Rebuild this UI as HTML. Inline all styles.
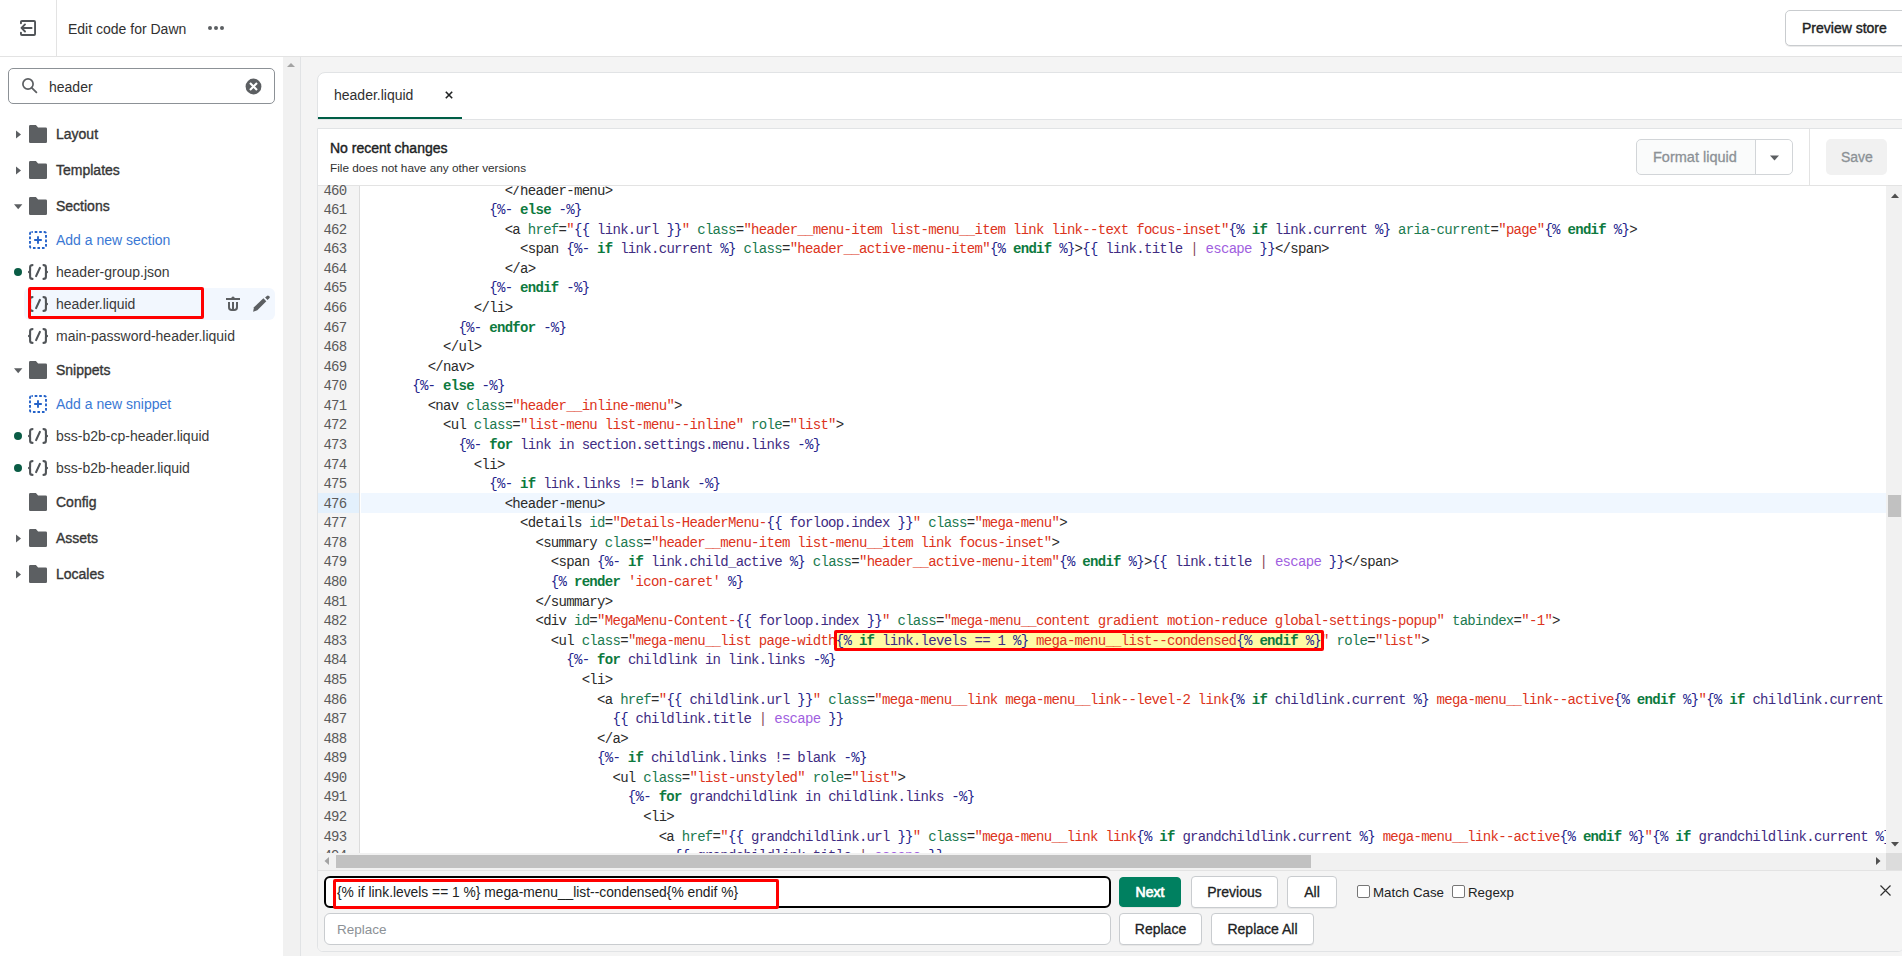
<!DOCTYPE html>
<html><head><meta charset="utf-8">
<style>
*{box-sizing:border-box;margin:0;padding:0}
html,body{width:1902px;height:956px;overflow:hidden;background:#fff;font-family:"Liberation Sans",sans-serif;color:#303030}
.abs{position:absolute}
/* top bar */
#top{position:absolute;left:0;top:0;width:1902px;height:57px;background:#fff;border-bottom:1px solid #e3e3e3}
#top .div{position:absolute;left:56px;top:0;width:1px;height:56px;background:#e3e3e3}
#top .title{position:absolute;left:68px;top:21px;font-size:14px;color:#303030;line-height:17px}
#preview{position:absolute;left:1785px;top:10px;width:130px;height:36px;border:1px solid #c9cccf;border-radius:5px;background:#fff;box-shadow:0 1px 0 rgba(0,0,0,.08)}
#preview span{position:absolute;left:16px;top:9px;font-size:14px;-webkit-text-stroke:0.4px #202223;color:#202223;line-height:17px}
/* sidebar */
#side{position:absolute;left:0;top:57px;width:283px;height:899px;background:#fff}
#sscroll{position:absolute;left:283px;top:57px;width:18px;height:899px;background:#f1f1f1;border-right:1px solid #e1e3e5}
#search{position:absolute;left:8px;top:68px;width:267px;height:36px;border:1px solid #8c9196;border-radius:5px;background:#fff}
#search .t{position:absolute;left:40px;top:10px;font-size:14px;color:#303030;line-height:17px}
.tri{position:absolute;width:0;height:0}
.tri.r{border-top:4px solid transparent;border-bottom:4px solid transparent;border-left:5px solid #5c5f62}
.tri.d{border-left:4px solid transparent;border-right:4px solid transparent;border-top:5px solid #5c5f62}
.fold{position:absolute;width:18px;height:18px}
.item{position:absolute;left:56px;font-size:14px;line-height:17px;color:#3a3a3a;white-space:nowrap}
.item.b{font-size:14px;-webkit-text-stroke:0.35px #303030}
.item.link{color:#3a78d4}
.dot{position:absolute;left:14px;width:8px;height:8px;border-radius:50%;background:#0a5c45}
.fic{position:absolute;left:28px;font-size:15px;color:#5c5f62;line-height:17px;font-family:"Liberation Mono",monospace}
/* main */
#main{position:absolute;left:301px;top:57px;width:1601px;height:899px;background:#f4f4f4}
#tabcard{position:absolute;left:317px;top:72px;width:1600px;height:48px;background:#fff;border:1px solid #e1e3e5;border-radius:8px 0 0 0}
#tabcard .tab{position:absolute;left:16px;top:14px;font-size:14px;color:#303030;line-height:17px}
#tabcard .x{position:absolute;left:126px;top:13px;font-size:14px;color:#303030}
#tabcard .ul{position:absolute;left:0;top:44px;width:144px;height:2px;background:#005e46}
#card{position:absolute;left:317px;top:128px;width:1587px;height:824px;background:#fff;border:1px solid #e1e3e5;border-radius:0 0 6px 6px;overflow:hidden}
#card .h1{position:absolute;left:12px;top:11px;font-size:14px;-webkit-text-stroke:0.4px #202223;color:#202223;line-height:17px}
#card .h2{position:absolute;left:12px;top:32px;font-size:11.8px;color:#303030;line-height:15px}
#hdrline{position:absolute;left:0;top:56px;width:1600px;height:1px;background:#e3e3e3}
#fmt{position:absolute;left:1318px;top:10px;width:157px;height:36px;border:1px solid #d2d5d8;border-radius:5px;background:#fafbfb}
#fmt span{position:absolute;left:16px;top:9px;font-size:14.5px;-webkit-text-stroke:0.3px #8c9196;color:#8c9196;line-height:17px}
#fmt .sep{position:absolute;left:118px;top:0;width:1px;height:34px;background:#d2d5d8}
#vsep{position:absolute;left:1491px;top:0;width:1px;height:56px;background:#e3e3e3}
#save{position:absolute;left:1508px;top:10px;width:61px;height:36px;border-radius:5px;background:#f1f1f1}
#save span{position:absolute;left:15px;top:10px;font-size:14px;-webkit-text-stroke:0.3px #8c9196;color:#8c9196;line-height:17px}
/* code */
#gutter{position:absolute;left:0;top:57px;width:42px;height:667px;background:#f4f4f4;border-right:1px solid #dcdcdc}
#code{position:absolute;left:43px;top:57px;width:1525px;height:667px;overflow:hidden;background:#fff}
.lines{position:absolute;left:0;top:0}
.gn{height:19.58px;line-height:19.58px;font-family:"Liberation Mono",monospace;font-size:14px;color:#5a5a5a;text-align:right;width:28.5px;letter-spacing:-0.7px}
.ln{height:19.58px;line-height:19.58px;font-family:"Liberation Mono",monospace;font-size:14px;white-space:pre;letter-spacing:-0.7px;color:#2b2b2b;padding-left:5px}
.gn.act{}
i{font-style:normal}
i.t{color:#2b2b2b}
i.a{color:#1b7a4f}
i.s{color:#dc3320}
i.d{color:#24248c}
i.k{color:#0d7a3e;font-weight:bold}
i.v{color:#3f2c82}
i.f{color:#9f5fe0}
i.p{color:#8a4a5c}
#match{position:absolute;background:#fffba5}
#vscroll{position:absolute;left:1568px;top:57px;width:17px;height:667px;background:#f1f1f1}
#hscroll{position:absolute;left:0;top:724px;width:1568px;height:17px;background:#f1f1f1}
#hthumb{position:absolute;left:18px;top:2px;width:975px;height:13px;background:#c1c1c1}
/* search panel */
#sp{position:absolute;left:0;top:741px;width:1600px;height:83px;background:#f4f4f4;border-top:1px solid #e3e3e3}
.inp{position:absolute;background:#fff;border-radius:6px}
.btn{position:absolute;height:30px;border:1px solid #c9cccf;border-radius:4px;background:#fff;font-size:14px;-webkit-text-stroke:0.3px #202223;color:#202223;text-align:center;line-height:29px;box-shadow:0 1px 0 rgba(0,0,0,.05)}
.redbox{position:absolute;border:3px solid #ff0000}
</style></head><body>
<div id="top">
  <svg class="abs" style="left:20px;top:20px" width="16" height="16" viewBox="0 0 16 16"><g fill="none" stroke="#505458" stroke-width="1.9" stroke-linecap="round" stroke-linejoin="round"><path d="M0.95 3.3V1.95a1 1 0 0 1 1-1h12.1a1 1 0 0 1 1 1v12.1a1 1 0 0 1-1 1H1.95a1 1 0 0 1-1-1V12.6"/><path d="M11.6 7.95H2M5 4.4L1.5 7.95L5 11.5"/></g></svg>
  <div class="div"></div>
  <div class="title">Edit code for Dawn</div>
  <svg class="abs" style="left:207px;top:24px" width="18" height="8" viewBox="0 0 18 8"><circle cx="3" cy="4" r="2" fill="#5c5f62"/><circle cx="9" cy="4" r="2" fill="#5c5f62"/><circle cx="15" cy="4" r="2" fill="#5c5f62"/></svg>
  <div id="preview"><span>Preview store</span></div>
</div>

<div id="side"></div>
<div id="sscroll"><div class="tri" style="position:absolute;left:4px;top:6px;border-left:4px solid transparent;border-right:4px solid transparent;border-bottom:4px solid #a3a3a3"></div></div>
<div id="search">
  <svg class="abs" style="left:12px;top:8px" width="18" height="18" viewBox="0 0 18 18"><circle cx="7" cy="7" r="5.1" fill="none" stroke="#5c5f62" stroke-width="1.7"/><path d="M10.8 10.8L15.4 15.3" stroke="#5c5f62" stroke-width="1.8" stroke-linecap="round"/></svg>
  <div class="t">header</div>
  <svg class="abs" style="left:235.5px;top:8.5px" width="17" height="17" viewBox="0 0 17 17"><circle cx="8.5" cy="8.5" r="7.9" fill="#5c5f62"/><path d="M5 5l7 7M12 5l-7 7" stroke="#fff" stroke-width="2.1"/></svg>
</div>

<svg class="abs" style="left:29px;top:125px" width="18" height="18" viewBox="0 0 18 18"><path d="M1.3 0.1h5.6l2.2 2.3h7.6a1.3 1.3 0 0 1 1.3 1.3v13a1.3 1.3 0 0 1-1.3 1.3H1.3A1.3 1.3 0 0 1 0 16.7V1.4A1.3 1.3 0 0 1 1.3 0.1z" fill="#5c5f62"/></svg>
<svg class="abs" style="left:15px;top:129.5px" width="7" height="9" viewBox="0 0 7 9"><path d="M1 0.5L6 4.5L1 8.5z" fill="#5c5f62"/></svg>
<div class="item b" style="top:125.65px">Layout</div>
<svg class="abs" style="left:29px;top:161px" width="18" height="18" viewBox="0 0 18 18"><path d="M1.3 0.1h5.6l2.2 2.3h7.6a1.3 1.3 0 0 1 1.3 1.3v13a1.3 1.3 0 0 1-1.3 1.3H1.3A1.3 1.3 0 0 1 0 16.7V1.4A1.3 1.3 0 0 1 1.3 0.1z" fill="#5c5f62"/></svg>
<svg class="abs" style="left:15px;top:165.5px" width="7" height="9" viewBox="0 0 7 9"><path d="M1 0.5L6 4.5L1 8.5z" fill="#5c5f62"/></svg>
<div class="item b" style="top:161.65px">Templates</div>
<svg class="abs" style="left:29px;top:197px" width="18" height="18" viewBox="0 0 18 18"><path d="M1.3 0.1h5.6l2.2 2.3h7.6a1.3 1.3 0 0 1 1.3 1.3v13a1.3 1.3 0 0 1-1.3 1.3H1.3A1.3 1.3 0 0 1 0 16.7V1.4A1.3 1.3 0 0 1 1.3 0.1z" fill="#5c5f62"/></svg>
<svg class="abs" style="left:13.8px;top:202.5px" width="9" height="7" viewBox="0 0 9 7"><path d="M0 1.2L8.4 1.2L4.2 6.2z" fill="#5c5f62"/></svg>
<div class="item b" style="top:197.65px">Sections</div>
<svg class="abs" style="left:29px;top:231px" width="18" height="18" viewBox="0 0 18 18"><rect x="1" y="1" width="16" height="16" rx="1.5" fill="none" stroke="#2462c9" stroke-width="1.9" stroke-dasharray="2.6 1.9" stroke-dashoffset="1.3"/><path d="M9 5.2v7.6M5.2 9h7.6" stroke="#2462c9" stroke-width="1.9"/></svg>
<div class="item link" style="top:231.65px">Add a new section</div>
<div class="dot" style="top:268px"></div>
<svg class="abs" style="left:28px;top:264px" width="20" height="16" viewBox="0 0 20 16"><g fill="none" stroke="#505458" stroke-width="2.1" stroke-linecap="round"><path d="M4.5 1.1C3 1.1 2.1 1.7 2.1 3.3V6.5C2.1 7.5 1.5 8 0.6 8C1.5 8 2.1 8.5 2.1 9.5V12.7C2.1 14.3 3 14.9 4.5 14.9"/><path d="M15.5 1.1C17 1.1 17.9 1.7 17.9 3.3V6.5C17.9 7.5 18.5 8 19.4 8C18.5 8 17.9 8.5 17.9 9.5V12.7C17.9 14.3 17 14.9 15.5 14.9"/><path d="M11.9 3.9L8.1 12.1"/><path d="M0.9 8H2.2M17.8 8H19.1" stroke-width="2"/></g></svg>
<div class="item" style="top:263.65px">header-group.json</div>
<div class="abs" style="left:24px;top:288px;width:251px;height:32px;background:#f2f7fe;border-radius:6px"></div>
<svg class="abs" style="left:28px;top:296px" width="20" height="16" viewBox="0 0 20 16"><g fill="none" stroke="#505458" stroke-width="2.1" stroke-linecap="round"><path d="M4.5 1.1C3 1.1 2.1 1.7 2.1 3.3V6.5C2.1 7.5 1.5 8 0.6 8C1.5 8 2.1 8.5 2.1 9.5V12.7C2.1 14.3 3 14.9 4.5 14.9"/><path d="M15.5 1.1C17 1.1 17.9 1.7 17.9 3.3V6.5C17.9 7.5 18.5 8 19.4 8C18.5 8 17.9 8.5 17.9 9.5V12.7C17.9 14.3 17 14.9 15.5 14.9"/><path d="M11.9 3.9L8.1 12.1"/><path d="M0.9 8H2.2M17.8 8H19.1" stroke-width="2"/></g></svg>
<div class="item" style="top:295.65px">header.liquid</div>
<svg class="abs" style="left:225px;top:295px" width="46" height="18" viewBox="0 0 46 18"><g fill="#5c5f62"><rect x="1" y="3" width="14" height="2"/><path d="M6.3 3.2a1.7 1.7 0 0 1 3.4 0z"/><path d="M28.1 16.7L29 12.3L38.4 3.2L41.3 6.2L32.3 15.3z"/><path d="M40.1 2.6L41.9 0.9a1.4 1.4 0 0 1 2 0l0.4 0.4a1.4 1.4 0 0 1 0 2L42.5 5.1z"/></g><path d="M4 7v5.2a2.8 2.8 0 0 0 2.8 2.8h2.4a2.8 2.8 0 0 0 2.8-2.8V7M8 7v7" fill="none" stroke="#5c5f62" stroke-width="2"/></svg>
<div class="redbox" style="left:28px;top:287px;width:176px;height:32px;border-radius:2px"></div>
<svg class="abs" style="left:28px;top:328px" width="20" height="16" viewBox="0 0 20 16"><g fill="none" stroke="#505458" stroke-width="2.1" stroke-linecap="round"><path d="M4.5 1.1C3 1.1 2.1 1.7 2.1 3.3V6.5C2.1 7.5 1.5 8 0.6 8C1.5 8 2.1 8.5 2.1 9.5V12.7C2.1 14.3 3 14.9 4.5 14.9"/><path d="M15.5 1.1C17 1.1 17.9 1.7 17.9 3.3V6.5C17.9 7.5 18.5 8 19.4 8C18.5 8 17.9 8.5 17.9 9.5V12.7C17.9 14.3 17 14.9 15.5 14.9"/><path d="M11.9 3.9L8.1 12.1"/><path d="M0.9 8H2.2M17.8 8H19.1" stroke-width="2"/></g></svg>
<div class="item" style="top:327.65px">main-password-header.liquid</div>
<svg class="abs" style="left:29px;top:361px" width="18" height="18" viewBox="0 0 18 18"><path d="M1.3 0.1h5.6l2.2 2.3h7.6a1.3 1.3 0 0 1 1.3 1.3v13a1.3 1.3 0 0 1-1.3 1.3H1.3A1.3 1.3 0 0 1 0 16.7V1.4A1.3 1.3 0 0 1 1.3 0.1z" fill="#5c5f62"/></svg>
<svg class="abs" style="left:13.8px;top:366.5px" width="9" height="7" viewBox="0 0 9 7"><path d="M0 1.2L8.4 1.2L4.2 6.2z" fill="#5c5f62"/></svg>
<div class="item b" style="top:361.65px">Snippets</div>
<svg class="abs" style="left:29px;top:395px" width="18" height="18" viewBox="0 0 18 18"><rect x="1" y="1" width="16" height="16" rx="1.5" fill="none" stroke="#2462c9" stroke-width="1.9" stroke-dasharray="2.6 1.9" stroke-dashoffset="1.3"/><path d="M9 5.2v7.6M5.2 9h7.6" stroke="#2462c9" stroke-width="1.9"/></svg>
<div class="item link" style="top:395.65px">Add a new snippet</div>
<div class="dot" style="top:432px"></div>
<svg class="abs" style="left:28px;top:428px" width="20" height="16" viewBox="0 0 20 16"><g fill="none" stroke="#505458" stroke-width="2.1" stroke-linecap="round"><path d="M4.5 1.1C3 1.1 2.1 1.7 2.1 3.3V6.5C2.1 7.5 1.5 8 0.6 8C1.5 8 2.1 8.5 2.1 9.5V12.7C2.1 14.3 3 14.9 4.5 14.9"/><path d="M15.5 1.1C17 1.1 17.9 1.7 17.9 3.3V6.5C17.9 7.5 18.5 8 19.4 8C18.5 8 17.9 8.5 17.9 9.5V12.7C17.9 14.3 17 14.9 15.5 14.9"/><path d="M11.9 3.9L8.1 12.1"/><path d="M0.9 8H2.2M17.8 8H19.1" stroke-width="2"/></g></svg>
<div class="item" style="top:427.65px">bss-b2b-cp-header.liquid</div>
<div class="dot" style="top:464px"></div>
<svg class="abs" style="left:28px;top:460px" width="20" height="16" viewBox="0 0 20 16"><g fill="none" stroke="#505458" stroke-width="2.1" stroke-linecap="round"><path d="M4.5 1.1C3 1.1 2.1 1.7 2.1 3.3V6.5C2.1 7.5 1.5 8 0.6 8C1.5 8 2.1 8.5 2.1 9.5V12.7C2.1 14.3 3 14.9 4.5 14.9"/><path d="M15.5 1.1C17 1.1 17.9 1.7 17.9 3.3V6.5C17.9 7.5 18.5 8 19.4 8C18.5 8 17.9 8.5 17.9 9.5V12.7C17.9 14.3 17 14.9 15.5 14.9"/><path d="M11.9 3.9L8.1 12.1"/><path d="M0.9 8H2.2M17.8 8H19.1" stroke-width="2"/></g></svg>
<div class="item" style="top:459.65px">bss-b2b-header.liquid</div>
<svg class="abs" style="left:29px;top:493px" width="18" height="18" viewBox="0 0 18 18"><path d="M1.3 0.1h5.6l2.2 2.3h7.6a1.3 1.3 0 0 1 1.3 1.3v13a1.3 1.3 0 0 1-1.3 1.3H1.3A1.3 1.3 0 0 1 0 16.7V1.4A1.3 1.3 0 0 1 1.3 0.1z" fill="#5c5f62"/></svg>
<div class="item b" style="top:493.65px">Config</div>
<svg class="abs" style="left:29px;top:529px" width="18" height="18" viewBox="0 0 18 18"><path d="M1.3 0.1h5.6l2.2 2.3h7.6a1.3 1.3 0 0 1 1.3 1.3v13a1.3 1.3 0 0 1-1.3 1.3H1.3A1.3 1.3 0 0 1 0 16.7V1.4A1.3 1.3 0 0 1 1.3 0.1z" fill="#5c5f62"/></svg>
<svg class="abs" style="left:15px;top:533.5px" width="7" height="9" viewBox="0 0 7 9"><path d="M1 0.5L6 4.5L1 8.5z" fill="#5c5f62"/></svg>
<div class="item b" style="top:529.65px">Assets</div>
<svg class="abs" style="left:29px;top:565px" width="18" height="18" viewBox="0 0 18 18"><path d="M1.3 0.1h5.6l2.2 2.3h7.6a1.3 1.3 0 0 1 1.3 1.3v13a1.3 1.3 0 0 1-1.3 1.3H1.3A1.3 1.3 0 0 1 0 16.7V1.4A1.3 1.3 0 0 1 1.3 0.1z" fill="#5c5f62"/></svg>
<svg class="abs" style="left:15px;top:569.5px" width="7" height="9" viewBox="0 0 7 9"><path d="M1 0.5L6 4.5L1 8.5z" fill="#5c5f62"/></svg>
<div class="item b" style="top:565.65px">Locales</div>

<div id="main"></div>
<div id="tabcard">
  <div class="tab">header.liquid</div>
  <svg class="abs" style="left:126.5px;top:18px" width="8" height="8" viewBox="0 0 8 8"><path d="M0.8 0.8l6.4 6.4M7.2 0.8l-6.4 6.4" stroke="#202223" stroke-width="1.6"/></svg>
  <div class="ul"></div>
</div>
<div id="card">
  <div class="h1">No recent changes</div>
  <div class="h2">File does not have any other versions</div>
  <div id="fmt"><span>Format liquid</span><div class="sep"></div><div class="abs" style="left:119px;top:0;width:36px;height:34px;background:#fff;border-radius:0 5px 5px 0"></div><svg class="abs" style="left:133px;top:15px" width="9" height="6" viewBox="0 0 9 6"><path d="M0 0.5h9L4.5 5.5z" fill="#5c5f62"/></svg></div>
  <div id="vsep"></div>
  <div id="save"><span>Save</span></div>
  <div id="hdrline"></div>
  <div id="gutter"><div class="abs" style="left:0;top:307px;width:41px;height:19.6px;background:#e3f0fc"></div><div class="lines" style="top:-4.5px"><div class="gn">460</div>
<div class="gn">461</div>
<div class="gn">462</div>
<div class="gn">463</div>
<div class="gn">464</div>
<div class="gn">465</div>
<div class="gn">466</div>
<div class="gn">467</div>
<div class="gn">468</div>
<div class="gn">469</div>
<div class="gn">470</div>
<div class="gn">471</div>
<div class="gn">472</div>
<div class="gn">473</div>
<div class="gn">474</div>
<div class="gn">475</div>
<div class="gn act">476</div>
<div class="gn">477</div>
<div class="gn">478</div>
<div class="gn">479</div>
<div class="gn">480</div>
<div class="gn">481</div>
<div class="gn">482</div>
<div class="gn">483</div>
<div class="gn">484</div>
<div class="gn">485</div>
<div class="gn">486</div>
<div class="gn">487</div>
<div class="gn">488</div>
<div class="gn">489</div>
<div class="gn">490</div>
<div class="gn">491</div>
<div class="gn">492</div>
<div class="gn">493</div>
<div class="gn">494</div></div></div>
  <div id="code"><div class="abs" style="left:0;top:307px;width:1525px;height:19.6px;background:#f0f7ff"></div><div id="match" style="left:474.7px;top:445.8px;width:485.1px;height:19.58px"></div><div class="lines" style="top:-4.5px"><div class="ln">                  <i class="t">&lt;/header-menu&gt;</i></div>
<div class="ln">                <i class="d">{%-</i> <i class="k">else</i> <i class="d">-%}</i></div>
<div class="ln">                  <i class="t">&lt;a</i> <i class="a">href</i><i class="t">=</i><i class="s">"</i><i class="d">{{</i> <i class="v">link.url</i> <i class="d">}}</i><i class="s">"</i> <i class="a">class</i><i class="t">=</i><i class="s">"header__menu-item list-menu__item link link--text focus-inset"</i><i class="d">{%</i> <i class="k">if</i> <i class="v">link.current</i> <i class="d">%}</i> <i class="a">aria-current</i><i class="t">=</i><i class="s">"page"</i><i class="d">{%</i> <i class="k">endif</i> <i class="d">%}</i><i class="t">&gt;</i></div>
<div class="ln">                    <i class="t">&lt;span</i> <i class="d">{%-</i> <i class="k">if</i> <i class="v">link.current</i> <i class="d">%}</i> <i class="a">class</i><i class="t">=</i><i class="s">"header__active-menu-item"</i><i class="d">{%</i> <i class="k">endif</i> <i class="d">%}</i><i class="t">&gt;</i><i class="d">{{</i> <i class="v">link.title</i> <i class="p">|</i> <i class="f">escape</i> <i class="d">}}</i><i class="t">&lt;/span&gt;</i></div>
<div class="ln">                  <i class="t">&lt;/a&gt;</i></div>
<div class="ln">                <i class="d">{%-</i> <i class="k">endif</i> <i class="d">-%}</i></div>
<div class="ln">              <i class="t">&lt;/li&gt;</i></div>
<div class="ln">            <i class="d">{%-</i> <i class="k">endfor</i> <i class="d">-%}</i></div>
<div class="ln">          <i class="t">&lt;/ul&gt;</i></div>
<div class="ln">        <i class="t">&lt;/nav&gt;</i></div>
<div class="ln">      <i class="d">{%-</i> <i class="k">else</i> <i class="d">-%}</i></div>
<div class="ln">        <i class="t">&lt;nav</i> <i class="a">class</i><i class="t">=</i><i class="s">"header__inline-menu"</i><i class="t">&gt;</i></div>
<div class="ln">          <i class="t">&lt;ul</i> <i class="a">class</i><i class="t">=</i><i class="s">"list-menu list-menu--inline"</i> <i class="a">role</i><i class="t">=</i><i class="s">"list"</i><i class="t">&gt;</i></div>
<div class="ln">            <i class="d">{%-</i> <i class="k">for</i> <i class="v">link</i> <i class="v">in</i> <i class="v">section.settings.menu.links</i> <i class="d">-%}</i></div>
<div class="ln">              <i class="t">&lt;li&gt;</i></div>
<div class="ln">                <i class="d">{%-</i> <i class="k">if</i> <i class="v">link.links</i> <i class="v">!=</i> <i class="v">blank</i> <i class="d">-%}</i></div>
<div class="ln act">                  <i class="t">&lt;header-menu&gt;</i></div>
<div class="ln">                    <i class="t">&lt;details</i> <i class="a">id</i><i class="t">=</i><i class="s">"Details-HeaderMenu-</i><i class="d">{{</i> <i class="v">forloop.index</i> <i class="d">}}</i><i class="s">"</i> <i class="a">class</i><i class="t">=</i><i class="s">"mega-menu"</i><i class="t">&gt;</i></div>
<div class="ln">                      <i class="t">&lt;summary</i> <i class="a">class</i><i class="t">=</i><i class="s">"header__menu-item list-menu__item link focus-inset"</i><i class="t">&gt;</i></div>
<div class="ln">                        <i class="t">&lt;span</i> <i class="d">{%-</i> <i class="k">if</i> <i class="v">link.child_active</i> <i class="d">%}</i> <i class="a">class</i><i class="t">=</i><i class="s">"header__active-menu-item"</i><i class="d">{%</i> <i class="k">endif</i> <i class="d">%}</i><i class="t">&gt;</i><i class="d">{{</i> <i class="v">link.title</i> <i class="p">|</i> <i class="f">escape</i> <i class="d">}}</i><i class="t">&lt;/span&gt;</i></div>
<div class="ln">                        <i class="d">{%</i> <i class="k">render</i> <i class="s">'icon-caret'</i> <i class="d">%}</i></div>
<div class="ln">                      <i class="t">&lt;/summary&gt;</i></div>
<div class="ln">                      <i class="t">&lt;div</i> <i class="a">id</i><i class="t">=</i><i class="s">"MegaMenu-Content-</i><i class="d">{{</i> <i class="v">forloop.index</i> <i class="d">}}</i><i class="s">"</i> <i class="a">class</i><i class="t">=</i><i class="s">"mega-menu__content gradient motion-reduce global-settings-popup"</i> <i class="a">tabindex</i><i class="t">=</i><i class="s">"-1"</i><i class="t">&gt;</i></div>
<div class="ln">                        <i class="t">&lt;ul</i> <i class="a">class</i><i class="t">=</i><i class="s">"mega-menu__list page-width</i><i class="d">{%</i> <i class="k">if</i> <i class="v">link.levels</i> <i class="v">==</i> <i class="v">1</i> <i class="d">%}</i><i class="s"> mega-menu__list--condensed</i><i class="d">{%</i> <i class="k">endif</i> <i class="d">%}</i><i class="s">"</i> <i class="a">role</i><i class="t">=</i><i class="s">"list"</i><i class="t">&gt;</i></div>
<div class="ln">                          <i class="d">{%-</i> <i class="k">for</i> <i class="v">childlink</i> <i class="v">in</i> <i class="v">link.links</i> <i class="d">-%}</i></div>
<div class="ln">                            <i class="t">&lt;li&gt;</i></div>
<div class="ln">                              <i class="t">&lt;a</i> <i class="a">href</i><i class="t">=</i><i class="s">"</i><i class="d">{{</i> <i class="v">childlink.url</i> <i class="d">}}</i><i class="s">"</i> <i class="a">class</i><i class="t">=</i><i class="s">"mega-menu__link mega-menu__link--level-2 link</i><i class="d">{%</i> <i class="k">if</i> <i class="v">childlink.current</i> <i class="d">%}</i><i class="s"> mega-menu__link--active</i><i class="d">{%</i> <i class="k">endif</i> <i class="d">%}</i><i class="s">"</i><i class="d">{%</i> <i class="k">if</i> <i class="v">childlink.current</i> <i class="d">%}</i> <i class="a">aria-current</i><i class="t">=</i><i class="s">"page"</i><i class="d">{%</i> <i class="k">endif</i> <i class="d">%}</i><i class="t">&gt;</i></div>
<div class="ln">                                <i class="d">{{</i> <i class="v">childlink.title</i> <i class="p">|</i> <i class="f">escape</i> <i class="d">}}</i></div>
<div class="ln">                              <i class="t">&lt;/a&gt;</i></div>
<div class="ln">                              <i class="d">{%-</i> <i class="k">if</i> <i class="v">childlink.links</i> <i class="v">!=</i> <i class="v">blank</i> <i class="d">-%}</i></div>
<div class="ln">                                <i class="t">&lt;ul</i> <i class="a">class</i><i class="t">=</i><i class="s">"list-unstyled"</i> <i class="a">role</i><i class="t">=</i><i class="s">"list"</i><i class="t">&gt;</i></div>
<div class="ln">                                  <i class="d">{%-</i> <i class="k">for</i> <i class="v">grandchildlink</i> <i class="v">in</i> <i class="v">childlink.links</i> <i class="d">-%}</i></div>
<div class="ln">                                    <i class="t">&lt;li&gt;</i></div>
<div class="ln">                                      <i class="t">&lt;a</i> <i class="a">href</i><i class="t">=</i><i class="s">"</i><i class="d">{{</i> <i class="v">grandchildlink.url</i> <i class="d">}}</i><i class="s">"</i> <i class="a">class</i><i class="t">=</i><i class="s">"mega-menu__link link</i><i class="d">{%</i> <i class="k">if</i> <i class="v">grandchildlink.current</i> <i class="d">%}</i><i class="s"> mega-menu__link--active</i><i class="d">{%</i> <i class="k">endif</i> <i class="d">%}</i><i class="s">"</i><i class="d">{%</i> <i class="k">if</i> <i class="v">grandchildlink.current</i> <i class="d">%}</i> <i class="a">aria-current</i><i class="t">=</i><i class="s">"page"</i><i class="d">{%</i> <i class="k">endif</i> <i class="d">%}</i><i class="t">&gt;</i></div>
<div class="ln">                                        <i class="d">{{</i> <i class="v">grandchildlink.title</i> <i class="p">|</i> <i class="f">escape</i> <i class="d">}}</i></div></div></div>
  <div id="vscroll"><svg class="abs" style="left:5px;top:7px" width="8" height="5" viewBox="0 0 8 5"><path d="M0 5L4 0.5L8 5z" fill="#505050"/></svg><div class="abs" style="left:2px;top:309px;width:13px;height:22px;background:#c1c1c1"></div><svg class="abs" style="left:5px;top:656px" width="8" height="5" viewBox="0 0 8 5"><path d="M0 0L4 4.5L8 0z" fill="#505050"/></svg></div>
  <div id="hscroll"><div id="hthumb"></div><svg class="abs" style="left:6px;top:4px" width="5" height="8" viewBox="0 0 5 8"><path d="M5 0L0.5 4L5 8z" fill="#a3a3a3"/></svg><svg class="abs" style="left:1558px;top:4px" width="5" height="8" viewBox="0 0 5 8"><path d="M0 0L4.5 4L0 8z" fill="#505050"/></svg></div>
  <div class="abs" style="left:1568px;top:724px;width:17px;height:17px;background:#dcdcdc"></div>
  <div id="sp">
    <div class="inp" style="left:6px;top:5px;width:787px;height:32px;border:2px solid #000"><span class="abs" style="left:11px;top:6px;font-size:13.8px;color:#202223;line-height:17px;white-space:pre">{% if link.levels == 1 %} mega-menu__list--condensed{% endif %}</span></div>
    <div class="redbox" style="left:15px;top:8px;width:446px;height:30px;border-radius:2px"></div>
    <div class="inp" style="left:6px;top:42px;width:787px;height:32px;border:1px solid #c9cccf"><span class="abs" style="left:12px;top:7px;font-size:13.5px;color:#8c9196;line-height:17px">Replace</span></div>
    <div class="btn" style="left:801px;top:6px;width:62px;background:#008060;border-color:#008060;color:#fff;-webkit-text-stroke:0.7px #fff">Next</div>
    <div class="btn" style="left:873px;top:5px;width:87px;height:32px;line-height:31px">Previous</div>
    <div class="btn" style="left:969px;top:5px;width:50px;height:32px;line-height:31px">All</div>
    <div class="btn" style="left:801px;top:42px;width:83px;height:32px;line-height:31px">Replace</div>
    <div class="btn" style="left:893px;top:42px;width:103px;height:32px;line-height:31px">Replace All</div>
    <div class="abs" style="left:1039px;top:14px;width:13px;height:13px;border:1px solid #767676;border-radius:2px;background:#fff"></div>
    <span class="abs" style="left:1055px;top:13px;font-size:13.3px;color:#202223;line-height:17px">Match Case</span>
    <div class="abs" style="left:1134px;top:14px;width:13px;height:13px;border:1px solid #767676;border-radius:2px;background:#fff"></div>
    <span class="abs" style="left:1150px;top:13px;font-size:13.3px;color:#202223;line-height:17px">Regexp</span>
    <svg class="abs" style="left:1562px;top:14px" width="11" height="11" viewBox="0 0 11 11"><path d="M0.5 0.5l10 10M10.5 0.5l-10 10" stroke="#303030" stroke-width="1.2"/></svg>
  </div>
</div>
<div class="redbox" style="left:834px;top:630px;width:490px;height:21px;border-radius:2px"></div>
</body></html>
